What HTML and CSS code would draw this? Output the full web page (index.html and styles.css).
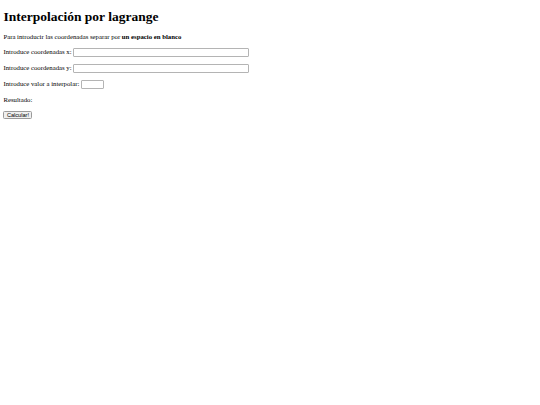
FILE: index.html
```html
<!DOCTYPE html>
<html lang="es">
<head>
<meta charset="utf-8">
<title>Interpolación por lagrange</title>
<link rel="stylesheet" href="styles.css">
</head>
<body>
<h1 class="title">Interpolación por lagrange</h1>
<p class="row">Para introducir las coordenadas separar por <b>un espacio en blanco</b></p>
<p class="row">Introduce coordenadas x: <input class="field wide" type="text"></p>
<p class="row">Introduce coordenadas y: <input class="field wide" type="text"></p>
<p class="row">Introduce valor a interpolar: <input class="field narrow" type="text"></p>
<p class="row">Resultado: <span class="result"></span></p>
<button class="btn" type="button">Calcular!</button>
</body>
</html>
```
FILE: styles.css
```css
html, body {
  background: #fff;
}
body {
  margin: 3.4px;
  font-family: "Liberation Serif", "Times New Roman", serif;
  font-size: 6.75px;
  color: #000;
}
.title {
  font-size: 13.5px;
  line-height: 15.5px;
  font-weight: bold;
  margin: 6px 0 8.5px;
}
.row {
  margin: 6.75px 0;
  line-height: 7.8px;
}
.field {
  box-sizing: border-box;
  height: 9.2px;
  border: 1px solid #b4b4b4;
  border-radius: 1px;
  padding: 0;
  margin: 0;
  font-size: 5.6px;
  line-height: 7px;
  vertical-align: top;
  background: #fff;
}
.wide {
  width: 176px;
}
.narrow {
  width: 23.5px;
}
.btn {
  display: block;
  box-sizing: border-box;
  font-family: "Liberation Sans", Arial, sans-serif;
  font-size: 5.6px;
  height: 8px;
  padding: 0 2.5px;
  margin: 7.25px 0 0;
  border: 1px solid #9a9a9a;
  border-radius: 1.5px;
  background: #efefef;
  color: #000;
  line-height: 6px;
}
```
